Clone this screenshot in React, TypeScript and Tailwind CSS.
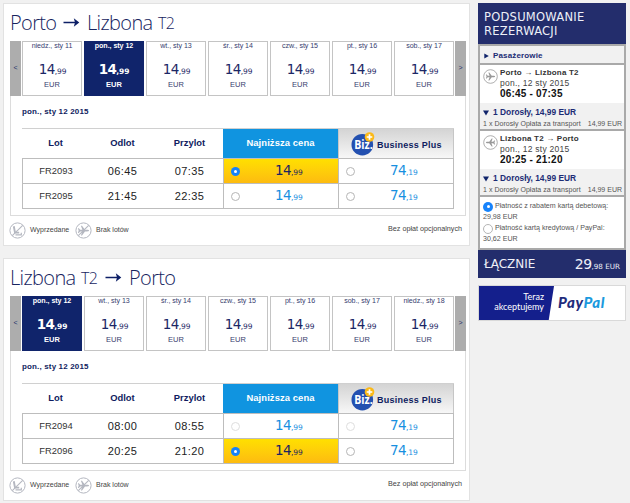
import { ReactNode } from "react";

type Day = { label: string };

type Flight = {
  code: string;
  departure: string;
  arrival: string;
  selected: boolean;
  faded?: boolean;
};

type Route = {
  title: ReactNode;
  days: Day[];
  activeDay: number;
  flights: Flight[];
};

const routes: Route[] = [
  {
    title: (
      <>
        <span className="w-[46px]">Porto</span>
        <Arrow className="ml-[7px] mr-[7px]" />
        <span className="w-[66px]">Lizbona</span>
        <span className="ml-[5px] text-[16px]">T2</span>
      </>
    ),
    days: [
      { label: "niedz., sty 11" },
      { label: "pon., sty 12" },
      { label: "wt., sty 13" },
      { label: "śr., sty 14" },
      { label: "czw., sty 15" },
      { label: "pt., sty 16" },
      { label: "sob., sty 17" },
    ],
    activeDay: 1,
    flights: [
      { code: "FR2093", departure: "06:45", arrival: "07:35", selected: true },
      { code: "FR2095", departure: "21:45", arrival: "22:35", selected: false },
    ],
  },
  {
    title: (
      <>
        <span className="w-[66px]">Lizbona</span>
        <span className="ml-[5px] w-[17px] text-[16px]">T2</span>
        <Arrow className="ml-[7px] mr-[7px]" />
        <span>Porto</span>
      </>
    ),
    days: [
      { label: "pon., sty 12" },
      { label: "wt., sty 13" },
      { label: "śr., sty 14" },
      { label: "czw., sty 15" },
      { label: "pt., sty 16" },
      { label: "sob., sty 17" },
      { label: "niedz., sty 18" },
    ],
    activeDay: 0,
    flights: [
      { code: "FR2094", departure: "08:00", arrival: "08:55", selected: false, faded: true },
      { code: "FR2096", departure: "20:25", arrival: "21:20", selected: true },
    ],
  },
];

function Arrow({ className }: { className: string }) {
  return (
    <svg width="17" height="11" viewBox="0 0 17 11" className={`shrink-0 ${className}`}>
      <path d="M0.5 5.5H13" stroke="#0d1f66" strokeWidth="1.5" />
      <path d="M10.8 1.2L16.3 5.5L10.8 9.8L12 5.5Z" fill="#0d1f66" />
    </svg>
  );
}

function Radio({ checked, faded, large }: { checked: boolean; faded?: boolean; large?: boolean }) {
  const size = large ? "size-[10px]" : "size-[9px]";
  if (checked) {
    return (
      <span className={`${size} flex shrink-0 items-center justify-center rounded-full bg-[#1783fb]`}>
        <span className="size-[3px] rounded-full bg-white" />
      </span>
    );
  }
  return (
    <span
      className={`${size} shrink-0 rounded-full border bg-white ${
        faded ? "border-[#dedede]" : "border-[#b5b5b5]"
      }`}
    />
  );
}

function Price({ whole, cents, className }: { whole: string; cents: string; className: string }) {
  return (
    <span className={`flex items-baseline font-['DejaVu_Sans',sans-serif] ${className}`}>
      <span className="text-[13.5px] leading-none tracking-[-0.6px]">{whole}</span>
      <span className="text-[7.5px] leading-none tracking-[-0.1px]">,{cents}</span>
    </span>
  );
}

function PlaneIcon({ x, y, scale, rotate }: { x: number; y: number; scale: number; rotate: number }) {
  return (
    <path
      transform={`translate(${x} ${y}) rotate(${rotate}) scale(${scale})`}
      d="M6 0C6 -0.7 5 -0.9 4 -0.9H1.6L-1.6 -5.2H-2.8L-1.2 -0.9H-3.6L-5 -2.6H-6L-5.2 0L-6 2.6H-5L-3.6 0.9H-1.2L-2.8 5.2H-1.6L1.6 0.9H4C5 0.9 6 0.7 6 0Z"
    />
  );
}

function SoldOutIcon() {
  return (
    <svg width="17" height="17" viewBox="0 0 17 17" fill="none" stroke="#b4b7c0">
      <circle cx="8.5" cy="8.5" r="7.6" strokeWidth="1" />
      <path d="M4.8 4.3L6 10.6H10.2" strokeWidth="1.9" />
      <path d="M6.5 12.8H12.3V10.8" strokeWidth="1.2" />
      <path d="M3.3 13.7L13.7 3.3" strokeWidth="1.1" />
    </svg>
  );
}

function NoFlightsIcon() {
  return (
    <svg width="17" height="17" viewBox="0 0 17 17">
      <g fill="#b4b7c0">
        <PlaneIcon x={8.5} y={8.6} scale={0.93} rotate={0} />
      </g>
      <circle cx="8.5" cy="8.5" r="7.6" fill="none" stroke="#b4b7c0" strokeWidth="1" />
      <path d="M3.3 13.7L13.7 3.3" stroke="#b4b7c0" strokeWidth="1.1" />
    </svg>
  );
}

function LegIcon({ back }: { back?: boolean }) {
  return (
    <svg width="15" height="15" viewBox="0 0 15 15">
      <circle cx="7.5" cy="7.5" r="6.8" fill="none" stroke="#999" strokeWidth="0.8" />
      <g fill="#999">
        <PlaneIcon x={7.5} y={7.5} scale={0.76} rotate={back ? 180 : 0} />
      </g>
    </svg>
  );
}

function BizLogo() {
  return (
    <svg width="24" height="24" viewBox="0 0 24 24" className="shrink-0 overflow-visible">
      <circle cx="11.3" cy="12.7" r="10.8" fill="#2350b0" />
      <text
        x="3.2"
        y="16.9"
        fill="#fff"
        fontSize="13"
        fontWeight="700"
        textLength="18.5"
        lengthAdjust="spacingAndGlyphs"
        fontFamily="'Open Sans', sans-serif"
      >
        Biz.
      </text>
      <circle cx="18.5" cy="5" r="4.8" fill="#fbb917" />
      <path d="M18.5 2.2V7.8M15.7 5H21.3" stroke="#fff" strokeWidth="1.7" />
    </svg>
  );
}

function DayCell({ day, active }: { day: Day; active: boolean }) {
  return (
    <div
      className={`flex h-[55px] w-[60px] flex-col items-center border ${
        active ? "border-[#10246b] bg-[#10246b] font-bold text-white" : "border-[#c4c4c4] bg-white text-[#37406f]"
      }`}
    >
      <span className="text-[7.1px] leading-[9px] tracking-[-0.05px] whitespace-nowrap">{day.label}</span>
      <Price
        whole="14"
        cents="99"
        className={`mt-[12px] ${active ? "text-white" : "ml-[1px] text-[#1b2765]"}`}
      />
      <span className="mt-[3px] text-[7.5px] leading-[9px]">EUR</span>
    </div>
  );
}

function FareCell({
  whole,
  cents,
  selected,
  faded,
}: {
  whole: string;
  cents: string;
  selected: boolean;
  faded?: boolean;
}) {
  return (
    <div
      className={`flex h-full w-[115px] items-center border-r border-[#bdbdbd] pl-[7px] ${
        selected ? "bg-linear-to-b from-[#ffe000] to-[#fdbb10]" : "bg-white"
      }`}
    >
      <Radio checked={selected} faded={faded} />
      <Price
        whole={whole}
        cents={cents}
        className={`ml-[35px] ${selected ? "text-[#1b2360]" : "text-[#178fe0]"}`}
      />
    </div>
  );
}

function FlightTable({ flights }: { flights: Flight[] }) {
  return (
    <div className="w-[432px]">
      <div className="flex h-[30px] items-center border-t border-[#d0d0d0] text-[9.4px] font-bold text-[#0f1c60]">
        <div className="w-[67px] text-center">Lot</div>
        <div className="w-[67px] text-center">Odlot</div>
        <div className="w-[67px] text-center">Przylot</div>
        <div className="flex h-full w-[115px] items-center justify-center bg-[#1094e0] tracking-[0.1px] text-white">
          Najniższa cena
        </div>
        <div className="flex h-full w-[116px] items-center border-r border-l border-[#c6c6c6] bg-linear-to-b from-[#d4d4d4] to-[#f7f7f7] pl-[12px]">
          <BizLogo />
          <span className="mt-[4px] ml-[2px] text-[9px] tracking-[0.25px] whitespace-nowrap">Business Plus</span>
        </div>
      </div>
      {flights.map((flight) => (
        <div
          key={flight.code}
          className="flex h-[25px] items-center border-t border-l border-[#bdbdbd] text-[#333] last:h-[26px] last:border-b"
        >
          <div className="w-[66px] text-center text-[9.4px]">{flight.code}</div>
          <div className="w-[67px] text-center text-[11px] tracking-[0.4px] text-[#222]">{flight.departure}</div>
          <div className="w-[67px] text-center text-[11px] tracking-[0.4px] text-[#222]">{flight.arrival}</div>
          <div className="flex h-full border-l border-[#bdbdbd]">
            <FareCell whole="14" cents="99" selected={flight.selected} faded={flight.faded} />
            <FareCell whole="74" cents="19" selected={false} faded={flight.faded} />
          </div>
        </div>
      ))}
    </div>
  );
}

function RouteCard({ route }: { route: Route }) {
  return (
    <section className="h-[243px] w-[467px] border border-[#e2e2e2] bg-white pl-[6px]">
      <h2 className="flex h-[37px] items-center font-['Open_Sans',sans-serif] text-[20px] font-light tracking-[-0.65px] text-[#17245f]">
        {route.title}
      </h2>
      <div className="h-[175px] w-[456px] border-x border-b border-[#dcdcdc]">
        <div className="-mx-px flex justify-between">
          <button className="w-[11px] bg-[#adadad] text-[7px] text-[#25306b]">&lt;</button>
          <div className="flex gap-[2px]">
            {route.days.map((day, index) => (
              <DayCell key={day.label} day={day} active={index === route.activeDay} />
            ))}
          </div>
          <button className="w-[11px] bg-[#adadad] text-[7px] text-[#25306b]">&gt;</button>
        </div>
        <div className="px-[11px]">
          <h3 className="mt-[10px] mb-[10px] text-[8px] leading-[12px] font-bold tracking-[0.15px] text-[#0f1c60]">
            pon., sty 12 2015
          </h3>
          <FlightTable flights={route.flights} />
        </div>
      </div>
      <div className="-ml-px mt-[6px] flex items-center pr-[7px] text-[7px] text-[#444]">
        <SoldOutIcon />
        <span className="ml-[4px] w-[45px] whitespace-nowrap">Wyprzedane</span>
        <NoFlightsIcon />
        <span className="ml-[4px]">Brak lotów</span>
        <span className="-mt-[3px] ml-auto text-[7.2px]">Bez opłat opcjonalnych</span>
      </div>
    </section>
  );
}

function Leg({ from, to, time, back }: { from: string; to: string; time: string; back?: boolean }) {
  return (
    <div className="h-[66px] border-b-2 border-[#a9a9a9]">
      <div className="flex h-[38px] bg-white pt-[3px] pl-[3px]">
        <div className="pt-[1px]">
          <LegIcon back={back} />
        </div>
        <div className="ml-[2px] whitespace-nowrap">
          <p className="text-[8px] leading-[10px] font-bold tracking-[0.2px] text-[#333]">
            {from} <span className="font-normal">→</span> {to}
          </p>
          <p className="text-[8.5px] leading-[10px] tracking-[0.25px] text-[#444]">pon., 12 sty 2015</p>
          <p className="text-[10px] leading-[12px] font-bold tracking-[0.2px] text-[#111]">{time}</p>
        </div>
      </div>
      <div className="h-[26px] pt-[4px] pl-[3px]">
        <p className="flex items-center text-[8.4px] leading-[11px] font-bold text-[#1c2c75]">
          <svg width="6" height="6" viewBox="0 0 6 6" className="mr-[4px]">
            <path d="M0 0.5H6L3 5.5Z" fill="#10246b" />
          </svg>
          1 Dorosły, 14,99 EUR
        </p>
        <p className="flex justify-between pr-[2px] text-[7px] leading-[12px] whitespace-nowrap text-[#555]">
          <span className="tracking-[0.04px]">1 x Dorosły Opłata za transport</span>
          <span>14,99 EUR</span>
        </p>
      </div>
    </div>
  );
}

function Summary() {
  return (
    <aside className="w-[148px]">
      <h2 className="h-[41px] bg-[#232d6c] pt-[7px] pl-[6px] font-['DejaVu_Sans',sans-serif] text-[11.5px] leading-[14px] tracking-[0.25px] text-[#eef0f8]">
        PODSUMOWANIE
        <br />
        REZERWACJI
      </h2>
      <div className="border-2 border-[#a9a9a9] bg-[#f1f1f1]">
        <div className="flex h-[19px] items-center border-b-2 border-[#a9a9a9] pt-[2px] pl-[4px] text-[8px] font-bold tracking-[0.15px] text-[#1c2c75]">
          <svg width="5" height="6" viewBox="0 0 5 6" className="mr-[4px]">
            <path d="M0.3 0.4V5.6L4.8 3Z" fill="#10246b" />
          </svg>
          Pasażerowie
        </div>
        <Leg from="Porto" to="Lizbona T2" time="06:45 - 07:35" />
        <Leg from="Lizbona T2" to="Porto" time="20:25 - 21:20" back />
        <div className="h-[51px] bg-white pt-[4px] pl-[3px] text-[7.1px] leading-[11px] whitespace-nowrap text-[#555]">
          <p className="flex items-center">
            <Radio checked large />
            <span className="ml-[2px]">Płatność z rabatem kartą debetową:</span>
          </p>
          <p>29,98 EUR</p>
          <p className="flex items-center">
            <Radio checked={false} large />
            <span className="ml-[2px]">Płatność kartą kredytową / PayPal:</span>
          </p>
          <p>30,62 EUR</p>
        </div>
      </div>
      <div className="flex h-[28px] items-center justify-between bg-[#232d6c] pr-[6px] pl-[6px] font-['DejaVu_Sans',sans-serif] text-[#eef0f8]">
        <span className="text-[12px]">ŁĄCZNIE</span>
        <span className="flex items-baseline">
          <span className="text-[14px] tracking-[-0.6px]">29</span>
          <span className="text-[7.2px]">,98 EUR</span>
        </span>
      </div>
      <div className="mt-[7px] flex h-[36px] border border-[#d9d9d9] bg-white">
        <div className="h-full w-[75px] shrink-0 bg-[#141f8c] pt-[6px] pr-[10px] text-right font-['Lato',sans-serif] text-[9px] leading-[10px] text-white [clip-path:polygon(0_0,100%_0,93%_100%,0_100%)]">
          <p>Teraz</p>
          <p>akceptujemy</p>
        </div>
        <div className="pt-[6px] pl-[4px] font-['Lato',sans-serif] text-[15px] leading-[20px] font-black tracking-[0.6px] text-[#1f2c7c] italic">
          Pay<span className="text-[#1b9ade]">Pal</span>
        </div>
      </div>
    </aside>
  );
}

export default function App() {
  return (
    <main className="flex h-[503px] w-[630px] items-start gap-[8px] overflow-hidden bg-[#f1f1f1] pt-[3px] pl-[3px] font-['Liberation_Sans',sans-serif]">
      <div className="flex flex-col gap-[12px]">
        {routes.map((route) => (
          <RouteCard key={route.activeDay} route={route} />
        ))}
      </div>
      <Summary />
    </main>
  );
}
